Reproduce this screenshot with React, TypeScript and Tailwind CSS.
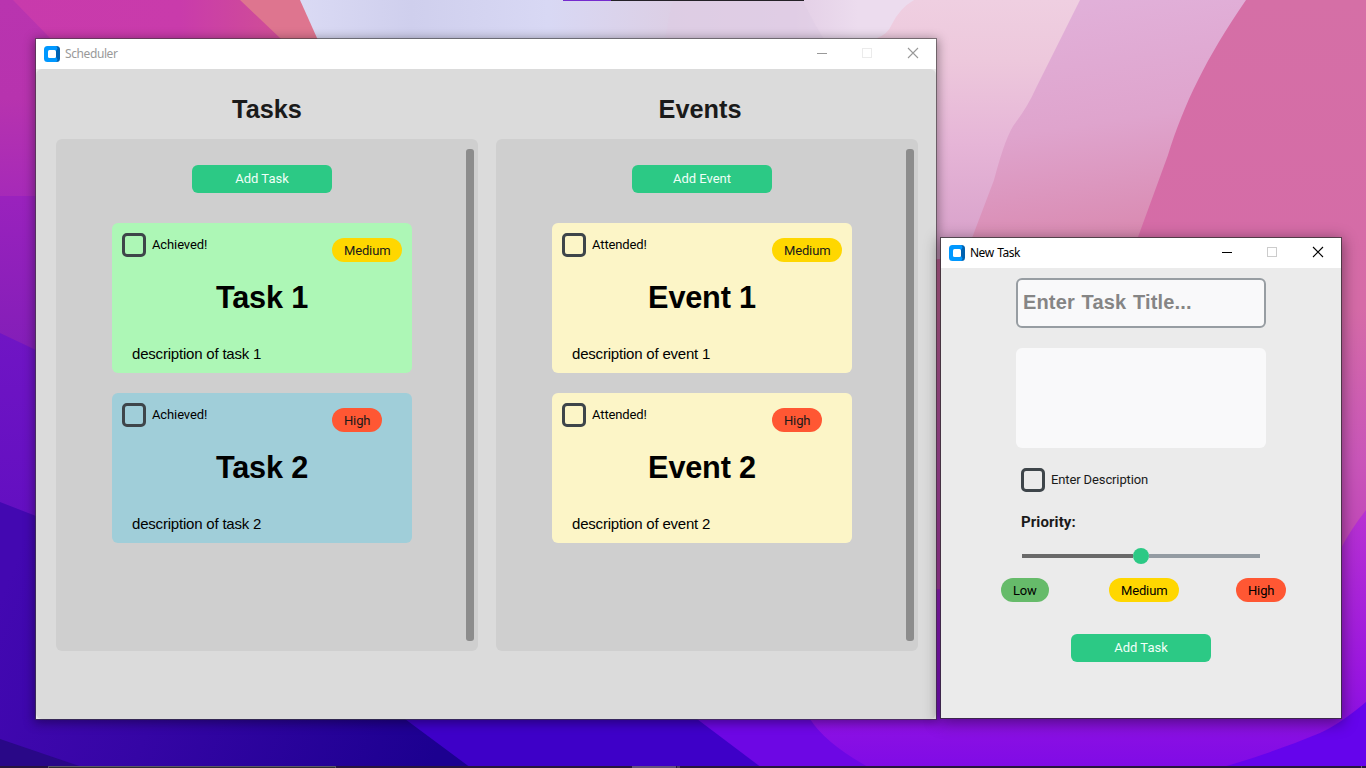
import React from 'react';

type Level = 'Low' | 'Medium' | 'High';

const badgeStyles: Record<Level, string> = {
  Low: 'w-12 bg-[#66bb6a]',
  Medium: 'w-[70px] bg-[#ffd700]',
  High: 'w-[50px] bg-[#ff5733]',
};

function Wallpaper() {
  return (
    <svg className="absolute inset-0" width="1366" height="768" viewBox="0 0 1366 768" aria-hidden="true">
      <defs>
        <linearGradient id="left" x1="0" y1="0" x2="0" y2="196" gradientUnits="userSpaceOnUse">
          <stop offset="0" stopColor="#b934af" /><stop offset="0.5" stopColor="#b733ae" /><stop offset="1" stopColor="#a62ab8" />
        </linearGradient>
        <linearGradient id="magenta" x1="0" y1="0" x2="300" y2="0" gradientUnits="userSpaceOnUse">
          <stop offset="0" stopColor="#c83aac" /><stop offset="0.6" stopColor="#c93bab" /><stop offset="0.9" stopColor="#cf4c98" />
        </linearGradient>
        <linearGradient id="lavender" x1="300" y1="0" x2="920" y2="0" gradientUnits="userSpaceOnUse">
          <stop offset="0" stopColor="#dadaf4" /><stop offset="0.18" stopColor="#cfcfed" /><stop offset="0.4" stopColor="#d8d8f4" />
          <stop offset="0.6" stopColor="#dccfe5" /><stop offset="0.8" stopColor="#e3cfe6" /><stop offset="0.9" stopColor="#ecdcee" /><stop offset="1" stopColor="#ecdcee" />
        </linearGradient>
        <linearGradient id="blush" x1="0" y1="0" x2="0" y2="240" gradientUnits="userSpaceOnUse">
          <stop offset="0" stopColor="#efcfe1" /><stop offset="0.25" stopColor="#edc8dc" /><stop offset="0.6" stopColor="#e6b5d7" /><stop offset="1" stopColor="#d9a2cb" />
        </linearGradient>
        <linearGradient id="orchid" x1="1100" y1="0" x2="1135" y2="240" gradientUnits="userSpaceOnUse">
          <stop offset="0" stopColor="#e1b0d9" /><stop offset="0.5" stopColor="#dfa4cd" /><stop offset="1" stopColor="#d989b0" />
        </linearGradient>
        <linearGradient id="rose" x1="0" y1="0" x2="0" y2="560" gradientUnits="userSpaceOnUse">
          <stop offset="0" stopColor="#d56fa6" /><stop offset="0.55" stopColor="#d56ba7" /><stop offset="0.82" stopColor="#c956b9" /><stop offset="1" stopColor="#c044b9" />
        </linearGradient>
        <linearGradient id="violet" x1="0" y1="196" x2="0" y2="350" gradientUnits="userSpaceOnUse">
          <stop offset="0" stopColor="#9a22bd" /><stop offset="1" stopColor="#831eb8" />
        </linearGradient>
        <linearGradient id="indigo" x1="0" y1="333" x2="0" y2="515" gradientUnits="userSpaceOnUse">
          <stop offset="0" stopColor="#7015c4" /><stop offset="1" stopColor="#630fc1" />
        </linearGradient>
        <linearGradient id="deep" x1="0" y1="600" x2="430" y2="768" gradientUnits="userSpaceOnUse">
          <stop offset="0" stopColor="#4308b1" /><stop offset="0.4" stopColor="#3505a5" /><stop offset="1" stopColor="#1c0090" />
        </linearGradient>
        <linearGradient id="right" x1="0" y1="510" x2="0" y2="768" gradientUnits="userSpaceOnUse">
          <stop offset="0" stopColor="#b832d2" /><stop offset="0.6" stopColor="#9c18df" /><stop offset="1" stopColor="#800be6" />
        </linearGradient>
      </defs>
      <rect width="1366" height="768" fill="url(#deep)" />
      <path d="M0 0H600V300H0Z" fill="url(#left)" />
      <path d="M13 0H260L300 58H70L50 38Z" fill="url(#magenta)" />
      <path d="M240 0H305L330 60H302L280 38Z" fill="#de758f" />
      <path d="M300 0H940V60H328L317 38Z" fill="url(#lavender)" />
      <path d="M673 0H802Q815 25 830 50H664Q668 18 673 0Z" fill="#dfcce4" fillOpacity=".55" />
      <path d="M914 0H1366V560H900V60L877 38Q888 34 892 24Q900 8 914 0Z" fill="url(#blush)" />
      <path d="M1080 0L1036 88Q1028 106 1016 122Q1006 134 994 180L972 238L930 400H1366V0Z" fill="url(#orchid)" />
      <path d="M1246 0C1206 58 1184 104 1168 155L1138 237L930 260V620H1366V0Z" fill="url(#rose)" />
      <path d="M0 196H200V450H0Z" fill="url(#violet)" />
      <path d="M0 333L36 350L200 430V560H0Z" fill="url(#indigo)" />
      <path d="M0 502L36 516L400 620V768H0Z" fill="url(#deep)" />
      <path d="M0 739L85 768H0Z" fill="#290887" />
      <path d="M350 680L405 719L471 768H800V680Z" fill="#3e00c8" />
      <path d="M650 680L697 719L762 768H1366V680Z" fill="#6d07e4" />
      <path d="M1366 510Q1351 529 1340 550L930 590V719H810Q826 744 870 768H1366Z" fill="url(#right)" />
      <path d="M1366 702Q1340 724 1320 733Q1275 752 1220 768H1366Z" fill="#6504ec" />
      <path d="M563 0H611V1H563Z" fill="#752bce" />
      <path d="M611 0H804V1H611Z" fill="#242127" />
      <path d="M0 766H1366V768H0Z" fill="#28153d" />
      <path d="M48 766H336V768H48Z" fill="#5b5861" />
      <path d="M49 767H335V768H49Z" fill="#302c35" />
      <path d="M632 766H676V768H632Z" fill="#65517b" />
      <path d="M677 766H680V768H677Z" fill="#4d3c60" />
      <path d="M1361 766H1362V768H1361Z" fill="#74647e" />
    </svg>
  );
}

function AppIcon() {
  return (
    <svg className="mb-px shrink-0" width="16" height="16" viewBox="0 0 16 16" aria-hidden="true">
      <rect x="4" width="12" height="16" rx="3.5" fill="#0062b1" />
      <path d="M3.5 0H12.5L13.5 2.5L12 5V11L13.5 13.5L12.5 16H3.5Q0 16 0 12.5V3.5Q0 0 3.5 0Z" fill="#0098ff" />
      <rect x="4" y="4" width="8" height="8" rx="1.5" fill="#fff" />
    </svg>
  );
}

function TitleBar({ title, active }: { title: string; active?: boolean }) {
  return (
    <header className={`flex h-[30px] items-center bg-white pl-2 ${active ? 'text-black' : 'text-[#999999]'}`}>
      <AppIcon />
      <span
        className={`ml-[5px] grow whitespace-nowrap font-['Noto_Sans',sans-serif] text-[12px] leading-4 ${
          active ? 'tracking-[-0.5px] [word-spacing:1px]' : 'tracking-[-0.4px]'
        }`}
      >
        {title}
      </span>
      <svg width="138" height="30" viewBox="0 0 138 30" fill="none" shapeRendering="crispEdges" aria-hidden="true">
        <path d="M19 14.5H29" stroke="currentColor" />
        <rect x="64.5" y="9.5" width="9" height="9" stroke={active ? '#cccccc' : '#ebebeb'} />
        <path d="M110 9L120 19M120 9L110 19" stroke="currentColor" strokeWidth="1.1" shapeRendering="auto" />
      </svg>
    </header>
  );
}

function Badge({ level, dark }: { level: Level; dark?: boolean }) {
  return (
    <span
      className={`flex h-6 items-center pt-0.5 pl-3 text-[13px] leading-5 tracking-[-0.15px] rounded-full ${badgeStyles[level]} ${
        dark ? 'text-black' : 'text-[#1a1a1a]'
      }`}
    >
      {level}
    </span>
  );
}

function CheckBox({ label, className }: { label: string; className?: string }) {
  return (
    <label className={`flex h-6 items-center gap-1.5 text-[13px] leading-5 tracking-[-0.12px] ${className ?? ''}`}>
      <span className="size-6 rounded-[5px] border-3 border-[#3e454a]" />
      <span>{label}</span>
    </label>
  );
}

function GreenButton({ children }: { children: React.ReactNode }) {
  return (
    <button className="flex h-7 w-[140px] items-center justify-center rounded-md bg-[#2cc985] text-[13px] leading-5 text-[#f0fff8]">
      {children}
    </button>
  );
}

interface Item {
  title: string;
  description: string;
  level: Level;
  color: string;
}

function Card({ item, check }: { item: Item; check: string }) {
  return (
    <article className={`flex h-[150px] w-[300px] flex-col rounded-md text-black ${item.color}`}>
      <div className="flex h-[39px] items-end">
        <CheckBox label={check} className="mb-[5px] ml-2.5 w-[210px]" />
        <Badge level={item.level} />
      </div>
      <h2 className="mt-[18px] text-center font-['Liberation_Sans',sans-serif] text-[30.7px] leading-9 font-bold tracking-[-0.2px]">
        {item.title}
      </h2>
      <p className="mt-[27px] ml-5 font-['Liberation_Sans',sans-serif] text-[15px] leading-[22px] tracking-[-0.2px]">
        {item.description}
      </p>
    </article>
  );
}

interface ColumnProps {
  heading: string;
  headingClass?: string;
  button: string;
  check: string;
  items: Item[];
}

function Column({ heading, headingClass, button, check, items }: ColumnProps) {
  return (
    <section className="w-[422px]">
      <h1
        className={`h-[70px] pt-[25px] text-center font-['Liberation_Sans',sans-serif] text-[25.3px] leading-[30px] font-bold text-[#1a1a1a] ${headingClass ?? ''}`}
      >
        {heading}
      </h1>
      <div className="flex h-[512px] rounded-md bg-[#cfcfcf] py-2.5 pr-1 pl-2.5">
        <div className="flex w-[392px] flex-col items-center pt-4">
          <GreenButton>{button}</GreenButton>
          <div className="mt-[30px] flex flex-col gap-5">
            {items.map((item) => (
              <Card key={item.title} item={item} check={check} />
            ))}
          </div>
        </div>
        <div className="ml-2 w-2 rounded-[3px] bg-[#8c8c8c]" />
      </div>
    </section>
  );
}

const tasks: Item[] = [
  { title: 'Task 1', description: 'description of task 1', level: 'Medium', color: 'bg-[#adf7b6]' },
  { title: 'Task 2', description: 'description of task 2', level: 'High', color: 'bg-[#a0ced9]' },
];

const events: Item[] = [
  { title: 'Event 1', description: 'description of event 1', level: 'Medium', color: 'bg-[#fcf5c7]' },
  { title: 'Event 2', description: 'description of event 2', level: 'High', color: 'bg-[#fcf5c7]' },
];

export default function App() {
  return (
    <div className="relative h-[768px] w-[1366px] overflow-hidden font-[Roboto,sans-serif]">
      <Wallpaper />

      <main className="absolute top-[38px] left-[35px] w-[902px] border border-[#40404099] bg-[#ebebeb] bg-clip-padding shadow-[0_2px_10px_1px_rgba(0,0,0,0.38)]">
        <TitleBar title="Scheduler" />
        <div className="flex h-[650px] gap-[18px] rounded-md bg-[#dbdbdb] pl-5">
          <Column heading="Tasks" button="Add Task" check="Achieved!" items={tasks} />
          <Column heading="Events" headingClass="pr-3.5" button="Add Event" check="Attended!" items={events} />
        </div>
      </main>

      <aside className="absolute top-[237px] left-[940px] w-[402px] border border-[#303030bb] bg-[#ebebeb] bg-clip-padding shadow-[0_3px_14px_1px_rgba(0,0,0,0.42)]">
        <TitleBar title="New Task" active />
        <div className="flex h-[450px] flex-col items-center pt-2.5 text-[#1a1a1a]">
          <div className="flex h-[50px] w-[250px] items-center rounded-md border-2 border-[#979da2] bg-[#f9f9fa] pl-[5px] font-['Liberation_Sans',sans-serif] text-[20px] font-bold tracking-[0.15px] text-[#858585] [word-spacing:1px]">
            <span className="-mt-0.5">Enter Task Title...</span>
          </div>
          <div className="mt-5 h-[100px] w-[250px] rounded-md bg-[#f9f9fa]" />
          <CheckBox label="Enter Description" className="mt-5 w-60" />
          <div className="mt-5 h-5 w-60 text-[15px] leading-5 font-bold tracking-[0.1px]">Priority:</div>
          <div className="mt-4 flex h-4 w-[238px] items-center">
            <div className="h-1 w-[111px] bg-[#696969]" />
            <div className="size-4 rounded-full bg-[#2cc985]" />
            <div className="h-1 w-[111px] bg-[#939ba2]" />
          </div>
          <div className="mt-3.5 ml-[5px] flex w-[285px] text-black">
            <Badge level="Low" dark />
            <div className="ml-[60px]"><Badge level="Medium" dark /></div>
            <div className="ml-[57px]"><Badge level="High" dark /></div>
          </div>
          <div className="mt-8">
            <GreenButton>Add Task</GreenButton>
          </div>
        </div>
      </aside>
    </div>
  );
}
